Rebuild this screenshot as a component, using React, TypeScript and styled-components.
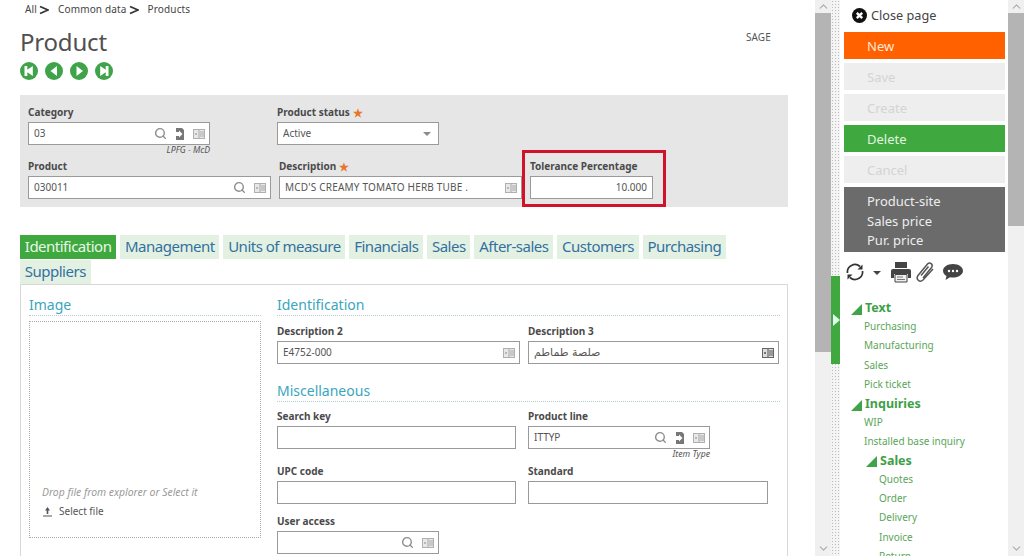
import React from "react";
import styled, { createGlobalStyle } from "styled-components";
import { Search, ChevronUp, ChevronDown } from "lucide-react";

const Global = createGlobalStyle`
  html, body { margin: 0; padding: 0; height: 556px; overflow: hidden; background: #fff; }
  body { font-family: "Noto Sans", "Open Sans", "Liberation Sans", sans-serif; color: #444; }
  * { box-sizing: border-box; }
`;

const Page = styled.div`display: flex; width: 1024px; height: 556px; overflow: hidden;`;
const Main = styled.main`width: 815px; flex: none; padding: 0 27px 0 20px; overflow: hidden;`;
const Crumbs = styled.nav`display: flex; align-items: center; height: 17px; padding-left: 5px; font-size: 10px; letter-spacing: 0.15px; color: #444;`;
const Crumb = styled.span`display: inline-flex; align-items: center; gap: 2px; margin-right: 9px;`;
const Chevron = styled.svg`width: 10px; height: 10px; margin-top: 2px;`;
const TitleRow = styled.div`display: flex; justify-content: space-between; height: 42px; padding-top: 8px;`;
const Title = styled.h1`margin: 0; font-size: 24px; letter-spacing: -0.2px; font-weight: 400; line-height: 34px; color: #505050;`;
const Sage = styled.span`font-size: 10px; letter-spacing: 0.15px; margin: 5px 17px 0 0; color: #555; line-height: 14px;`;
const NavRow = styled.div`display: flex; gap: 7px; height: 20px; margin-top: 3px;`;
const FormPanel = styled.section`
  margin-top: 13px; height: 112px; background: #e6e6e6; padding: 10px 8px 0;
  display: flex; flex-direction: column;
`;
const PanelRow = styled.div<{ $h: number }>`display: flex; height: ${p => p.$h}px; align-items: flex-start;`;
const Field = styled.div<{ $w: number; $ml?: number }>`
  position: relative; width: ${p => p.$w}px; margin-left: ${p => p.$ml ?? 0}px; flex: none;
`;
const Label = styled.div`
  font-size: 10px; font-weight: 700; line-height: 14px; height: 17px; color: #4a4a4a; white-space: nowrap;
  display: flex; align-items: flex-start; gap: 3px;
`;
const Star = styled.span`color: #e8762a; font-size: 11px; line-height: 15px;`;
const Input = styled.div<{ $right?: boolean }>`
  height: 23px; background: #fff; border: 1px solid #9a9a9a; display: flex; align-items: center;
  padding: 0 4px 0 5px; font-size: 10px; color: #555; gap: 8px;
  justify-content: ${p => (p.$right ? "flex-end" : "flex-start")};
`;
const Value = styled.span<{ $ls?: number }>`
  flex: 1; white-space: nowrap; overflow: hidden; letter-spacing: ${p => p.$ls ?? 0}px; line-height: 14px; margin-top: -1px;
`;
const RightValue = styled.span`padding-right: 1px; color: #555; line-height: 14px; margin-top: -1px;`;
const Arabic = styled.span`flex: 1; font-family: "DejaVu Sans", sans-serif; font-size: 11px; color: #555;`;
const Caption = styled.div`font-size: 8.7px; font-style: italic; text-align: right; color: #555; line-height: 11px;`;
const Caret = styled.span`
  width: 0; height: 0; margin-right: 3px; border-left: 4px solid transparent; border-right: 4px solid transparent; border-top: 4px solid #8a8a8a;
`;
const RedBox = styled.div`
  position: absolute; left: -8px; top: -9px; width: 144px; height: 57px; border: 3px solid #d2122b; pointer-events: none;
`;
const Tabs = styled.div`display: flex; flex-wrap: wrap; gap: 1px 4px; margin-top: 28px; width: 768px;`;
const Tab = styled.div<{ $active?: boolean }>`
  height: 24px; padding: 0 4.8px; font-size: 15px; letter-spacing: -0.5px; line-height: 23px; white-space: nowrap;
  background: ${p => (p.$active ? "#3fa83f" : "#e3f1e3")};
  color: ${p => (p.$active ? "#e8f8e8" : "#33709f")};
`;
const Card = styled.section`
  width: 768px; height: 290px; border: 1px solid #d8d8d8; border-bottom: 0; padding: 10px 8px 0;
  display: flex; gap: 16px;
`;
const ImageCol = styled.div`width: 232px; flex: none;`;
const DataCol = styled.div`width: 503px; flex: none;`;
const Heading = styled.h2`
  margin: 0; height: 21px; font-size: 14px; font-weight: 400; line-height: 20px; color: #3aa6bd;
  border-bottom: 1px dotted #b4cdd4;
`;
const Drop = styled.div`
  margin-top: 5px; height: 217px; border: 1px dotted #aaa; padding: 163px 0 0 12px;
`;
const DropHint = styled.div`font-size: 10.4px; font-style: italic; color: #9a9a9a; line-height: 14px;`;
const SelectFile = styled.div`display: flex; align-items: center; gap: 6px; font-size: 10px; color: #555; margin-top: 5px; line-height: 14px;`;
const FormRow = styled.div<{ $h: number; $mt: number }>`
  display: flex; height: ${p => p.$h}px; margin-top: ${p => p.$mt}px; align-items: flex-start;
`;
const Bar = styled.div`
  position: relative; width: 16px; height: 556px; flex: none; background: #f0f0f0; display: flex; flex-direction: column; justify-content: space-between; align-items: center;
`;
const Thumb = styled.div<{ $h: number }>`
  position: absolute; top: 13px; left: 0; width: 16px; height: ${p => p.$h}px; background: #b4b4b4;
`;
const Splitter = styled.div`
  position: relative; width: 9px; flex: none; height: 556px; background-color: #f4f4f4;
  background-image: radial-gradient(#bdbdbd 0.8px, transparent 1px); background-size: 3px 3px;
`;
const Grip = styled.div`
  position: absolute; left: 0; top: 276px; width: 9px; height: 88px; background: #3fa83f; display: flex; align-items: center;
`;
const GripArrow = styled.span`
  width: 0; height: 0; border-top: 6px solid transparent; border-bottom: 6px solid transparent; border-left: 7px solid #e4f7f0; margin-left: 2px;
`;
const Side = styled.aside`width: 168px; flex: none; padding: 0 3px 0 4px; overflow: hidden; height: 556px;`;
const Close = styled.div`display: flex; align-items: center; gap: 4px; height: 32px; padding: 0 0 2px 8px; font-size: 12.7px; color: #444;`;
const Action = styled.div<{ $bg: string; $fg: string }>`
  height: 27px; margin-bottom: 4px; padding-left: 23px; font-size: 13px; line-height: 28px;
  background: ${p => p.$bg}; color: ${p => p.$fg};
`;
const Links = styled.div`
  height: 65px; background: #6b6b6b; color: #eee; padding: 5px 0 0 23px; font-size: 13px; line-height: 19.5px;
`;
const Tools = styled.div`display: flex; align-items: center; height: 30px; margin-top: 5px; padding-left: 1px;`;
const ToolIcon = styled.svg<{ $ml?: number }>`flex: none; margin-left: ${p => p.$ml ?? 0}px;`;
const Tree = styled.div`margin-top: 11px; padding-left: 7px; color: #4ea24e;`;
const TreeHead = styled.div<{ $indent?: number }>`
  display: flex; align-items: center; gap: 3px; height: 19px; margin-left: ${p => p.$indent ?? 0}px;
  margin-top: ${p => (p.$indent ? -1 : 0)}px;
  font-size: 12.5px; font-weight: 700; color: #3f9f49; line-height: 19px;
`;
const TreeItem = styled.div<{ $indent?: number }>`
  height: 19.3px; font-size: 10px; line-height: 19px; color: #5aa55a; white-space: nowrap; padding-left: ${p => p.$indent ?? 13}px;
`;

const Mag = () => <Search size={13} color="#8c8c8c" strokeWidth={2.6} style={{ flex: "none" }} />;
const Lookup = () => (
  <svg width="10" height="12" viewBox="0 0 10 12" style={{ flex: "none" }}>
    <path d="M1 0h6l2 2v10H1V8h3v1.500L7.500 6 4 2.500V4H1z" fill="#777" />
  </svg>
);
const Panel = ({ dark }: { dark?: boolean }) => (
  <svg width="12" height="10" viewBox="0 0 12 10" style={{ flex: "none" }}>
    <rect x="0.5" y="0.5" width="11" height="9" fill={dark ? "#ddd" : "#e8e8e8"} stroke={dark ? "#666" : "#b0b0b0"} />
    <path d="M6 1v8M2 5h2M3 4v2M7 3h4M7 5h4M7 7h4" stroke={dark ? "#555" : "#a8a8a8"} fill="none" />
  </svg>
);
const Arrow = () => (
  <Chevron viewBox="0 0 10 10"><path d="M1 1.500 9 5 1 8.500" fill="none" stroke="#333" strokeWidth="1.700" /></Chevron>
);
const NavBtn = ({ d }: { d: string }) => (
  <svg width="18" height="18" viewBox="0 0 18 18">
    <circle cx="9" cy="9" r="9" fill="#3fa34a" />
    <path d={d} fill="#fff" />
  </svg>
);
const Tri = () => (
  <svg width="11" height="11" viewBox="0 0 11 11" style={{ flex: "none", marginTop: 3 }}><path d="M0 11 11 0v11z" fill="#3fa34a" /></svg>
);

export default function App() {
  return (
    <Page>
      <Global />
      <Main>
        <Crumbs>
          <Crumb>All <Arrow /></Crumb>
          <Crumb>Common data <Arrow /></Crumb>
          <Crumb>Products</Crumb>
        </Crumbs>
        <TitleRow>
          <Title>Product</Title>
          <Sage>SAGE</Sage>
        </TitleRow>
        <NavRow>
          <NavBtn d="M4.500 4h2.800v3.800L12.800 4v10L7.300 10.200V14H4.500z" />
          <NavBtn d="M12 4v10L5.500 9z" />
          <NavBtn d="M6.500 4v10L13 9z" />
          <NavBtn d="M13.500 4h-2.800v3.800L5.200 4v10l5.500-3.800V14h2.800z" />
        </NavRow>
        <FormPanel>
          <PanelRow $h={54}>
            <Field $w={182}>
              <Label>Category</Label>
              <Input><Value>03</Value><Mag /><Lookup /><Panel /></Input>
              <Caption>LPFG - McD</Caption>
            </Field>
            <Field $w={162} $ml={67}>
              <Label>Product status <Star>★</Star></Label>
              <Input><Value>Active</Value><Caret /></Input>
            </Field>
          </PanelRow>
          <PanelRow $h={41}>
            <Field $w={243}>
              <Label>Product</Label>
              <Input><Value>030011</Value><Mag /><Panel /></Input>
            </Field>
            <Field $w={243} $ml={8}>
              <Label>Description <Star>★</Star></Label>
              <Input><Value $ls={0.2}>MCD'S CREAMY TOMATO HERB TUBE .</Value><Panel /></Input>
            </Field>
            <Field $w={123} $ml={8}>
              <Label>Tolerance Percentage</Label>
              <Input $right><RightValue>10.000</RightValue></Input>
              <RedBox />
            </Field>
          </PanelRow>
        </FormPanel>
        <Tabs>
          <Tab $active>Identification</Tab>
          <Tab>Management</Tab>
          <Tab>Units of measure</Tab>
          <Tab>Financials</Tab>
          <Tab>Sales</Tab>
          <Tab>After-sales</Tab>
          <Tab>Customers</Tab>
          <Tab>Purchasing</Tab>
          <Tab>Suppliers</Tab>
        </Tabs>
        <Card>
          <ImageCol>
            <Heading>Image</Heading>
            <Drop>
              <DropHint>Drop file from explorer or Select it</DropHint>
              <SelectFile>
                <svg width="11" height="11" viewBox="0 0 11 11"><path d="M5.500 1 8 4.500H6.300V8H4.700V4.500H3zM1 9.500h9v1H1z" fill="#555" /></svg>
                Select file
              </SelectFile>
            </Drop>
          </ImageCol>
          <DataCol>
            <Heading>Identification</Heading>
            <FormRow $h={57} $mt={8}>
              <Field $w={243}>
                <Label>Description 2</Label>
                <Input><Value>E4752-000</Value><Panel /></Input>
              </Field>
              <Field $w={251} $ml={8}>
                <Label>Description 3</Label>
                <Input><Arabic>صلصة طماطم</Arabic><Panel dark /></Input>
              </Field>
            </FormRow>
            <Heading>Miscellaneous</Heading>
            <FormRow $h={55} $mt={7}>
              <Field $w={239}>
                <Label>Search key</Label>
                <Input />
              </Field>
              <Field $w={182} $ml={12}>
                <Label>Product line</Label>
                <Input><Value>ITTYP</Value><Mag /><Lookup /><Panel /></Input>
                <Caption>Item Type</Caption>
              </Field>
            </FormRow>
            <FormRow $h={50} $mt={0}>
              <Field $w={239}>
                <Label>UPC code</Label>
                <Input />
              </Field>
              <Field $w={240} $ml={12}>
                <Label>Standard</Label>
                <Input />
              </Field>
            </FormRow>
            <FormRow $h={40} $mt={0}>
              <Field $w={162}>
                <Label>User access</Label>
                <Input><Value /><Mag /><Panel /></Input>
              </Field>
            </FormRow>
          </DataCol>
        </Card>
      </Main>
      <Bar>
        <Thumb $h={339} />
        <ChevronUp size={13} color="#aaa" />
        <ChevronDown size={13} color="#aaa" style={{ marginBottom: 1 }} />
      </Bar>
      <Splitter>
        <Grip><GripArrow /></Grip>
      </Splitter>
      <Side>
        <Close>
          <svg width="15" height="15" viewBox="0 0 15 15">
            <circle cx="7.500" cy="7.500" r="7.500" fill="#111" />
            <path d="M4.800 4.800l5.400 5.400M10.200 4.800l-5.400 5.400" stroke="#fff" strokeWidth="2.400" />
          </svg>
          Close page
        </Close>
        <Action $bg="#ff6000" $fg="#ffe9d8">New</Action>
        <Action $bg="#eeeeee" $fg="#d4d4d4">Save</Action>
        <Action $bg="#eeeeee" $fg="#d4d4d4">Create</Action>
        <Action $bg="#3fa83f" $fg="#e0f6e0">Delete</Action>
        <Action $bg="#eeeeee" $fg="#d4d4d4">Cancel</Action>
        <Links>Product-site<br />Sales price<br />Pur. price</Links>
        <Tools>
          <ToolIcon width="20" height="20" viewBox="0 0 20 20" fill="none" stroke="#333" strokeWidth="1.700">
            <path d="M2.500 11A7.500 7.500 0 0 1 15 4.500" />
            <path d="M17.500 9A7.500 7.500 0 0 1 5 15.500" />
            <path d="M17.500 2.500v5h-5z" fill="#333" stroke="none" />
            <path d="M2.500 17.500v-5h5z" fill="#333" stroke="none" />
          </ToolIcon>
          <ToolIcon $ml={7} width="10" height="20" viewBox="0 0 10 20"><path d="M1 9h8l-4 4z" fill="#444" /></ToolIcon>
          <ToolIcon $ml={8} width="22" height="22" viewBox="0 0 22 22">
            <path d="M5 1h12v6H5z" fill="#444" />
            <path d="M3 8h16a2 2 0 0 1 2 2v7h-3v-4H4v4H1v-7a2 2 0 0 1 2-2z" fill="#444" />
            <path d="M5 13.500h12V21H5z" fill="#eee" stroke="#444" />
            <path d="M7 16h6M7 18.500h8" stroke="#777" />
          </ToolIcon>
          <ToolIcon $ml={3} width="20" height="22" viewBox="0 0 20 22" fill="none" stroke="#555" strokeWidth="1.500">
            <path d="M8 17 16.500 6.500C18.500 3.500 15 .5 12.500 3L3 14.500C.5 18 4.500 22 8 19L18 8" />
            <path d="M6 14.500 13.500 5.500" />
          </ToolIcon>
          <ToolIcon $ml={7} width="22" height="18" viewBox="0 0 22 18">
            <path d="M11 1c5.500 0 10 2.900 10 6.800s-4.500 6.800-10 6.800c-1 0-2-.1-3-.3L3.500 17l1-4C2.300 11.800 1 10 1 7.800 1 3.900 5.500 1 11 1z" fill="#444" />
            <circle cx="7" cy="8" r="1.200" fill="#fff" /><circle cx="11" cy="8" r="1.200" fill="#fff" /><circle cx="15" cy="8" r="1.200" fill="#fff" />
          </ToolIcon>
        </Tools>
        <Tree>
          <TreeHead><Tri />Text</TreeHead>
          <TreeItem>Purchasing</TreeItem>
          <TreeItem>Manufacturing</TreeItem>
          <TreeItem>Sales</TreeItem>
          <TreeItem>Pick ticket</TreeItem>
          <TreeHead><Tri />Inquiries</TreeHead>
          <TreeItem>WIP</TreeItem>
          <TreeItem>Installed base inquiry</TreeItem>
          <TreeHead $indent={15}><Tri />Sales</TreeHead>
          <TreeItem $indent={28}>Quotes</TreeItem>
          <TreeItem $indent={28}>Order</TreeItem>
          <TreeItem $indent={28}>Delivery</TreeItem>
          <TreeItem $indent={28}>Invoice</TreeItem>
          <TreeItem $indent={28}>Return</TreeItem>
        </Tree>
      </Side>
      <Bar>
        <Thumb $h={213} />
        <ChevronUp size={13} color="#aaa" />
        <ChevronDown size={13} color="#aaa" style={{ marginBottom: 1 }} />
      </Bar>
    </Page>
  );
}
